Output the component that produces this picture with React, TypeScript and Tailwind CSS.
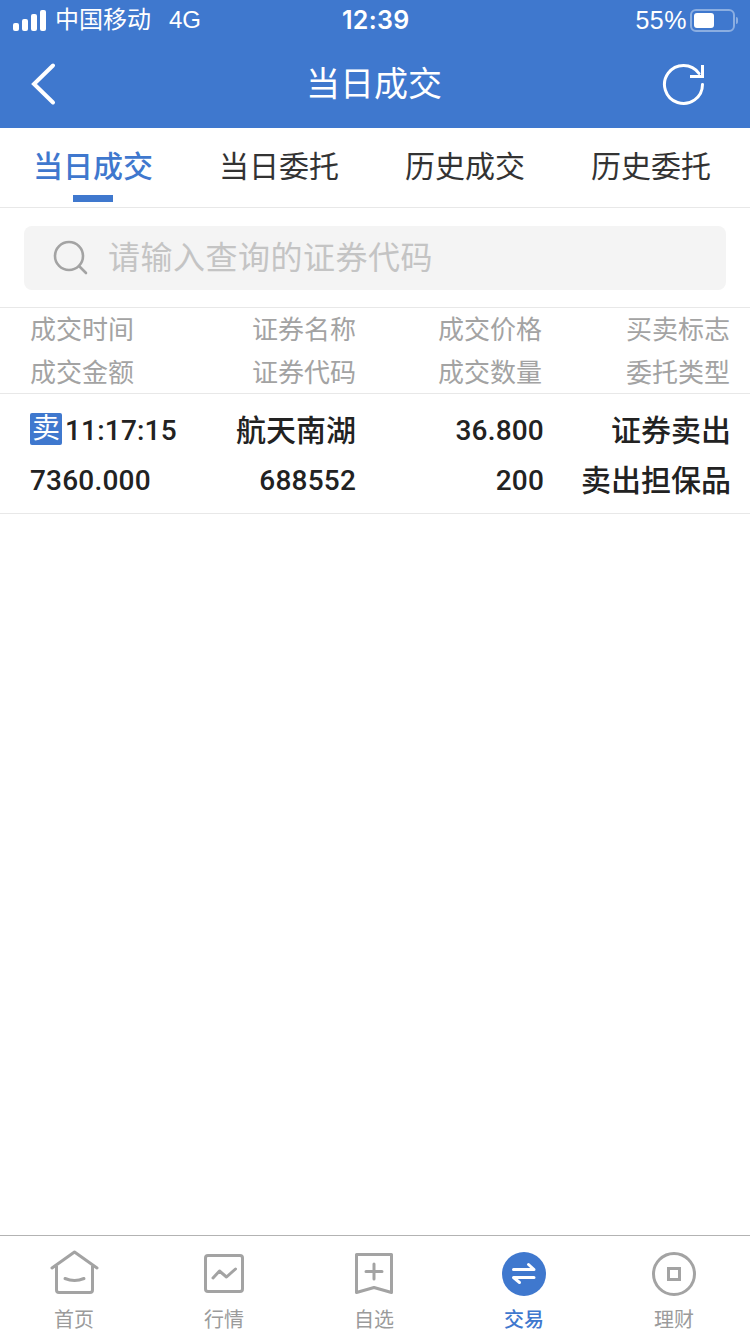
const cjk = "font-['Helvetica_Neue','Liberation_Sans','Noto_Sans_CJK_SC',sans-serif]";
const num = "font-['Roboto',sans-serif] font-medium text-[28px] tracking-[0.2px]";

function Signal() {
  return (
    <div className="flex items-end gap-[3px]">
      <div className="w-[6px] h-[8px] rounded-[2px] bg-white" />
      <div className="w-[6px] h-[12px] rounded-[2px] bg-white" />
      <div className="w-[6px] h-[17px] rounded-[2px] bg-white" />
      <div className="w-[6px] h-[21px] rounded-[2px] bg-white" />
    </div>
  );
}

function Battery() {
  return (
    <div className="flex items-center">
      <div className="w-[45px] h-[23px] rounded-[6px] border-2 border-white/40 p-[2px]">
        <div className="w-[20px] h-full rounded-[3px] bg-white" />
      </div>
      <div className="w-[2px] h-[7px] ml-[1px] rounded-r-[2px] bg-white/40" />
    </div>
  );
}

function Tab({ label, active }: { label: string; active?: boolean }) {
  return (
    <div className="relative flex justify-center pt-[18px]">
      <span className={`text-[30px] leading-[42px] ${active ? "text-[#3f78ce] font-medium" : "text-[#333333]"}`}>{label}</span>
      {active && <div className="absolute left-[73px] top-[67px] w-[40px] h-[7px] bg-[#3f78ce]" />}
    </div>
  );
}

const headerRows = [
  ["成交时间", "证券名称", "成交价格", "买卖标志"],
  ["成交金额", "证券代码", "成交数量", "委托类型"],
];

function NavItem({ label, active, children }: { label: string; active?: boolean; children: React.ReactNode }) {
  return (
    <div className="flex flex-col items-center pt-[13px] pr-[2px]">
      <svg width="50" height="50" viewBox="0 0 50 50" fill="none">
        {children}
      </svg>
      <span className={`text-[20px] leading-[28px] mt-[7px] ${active ? "text-[#3f78ce] font-medium" : "text-[#9b9b9b]"}`}>{label}</span>
    </div>
  );
}

export default function App() {
  return (
    <div className={`relative w-[750px] h-[1334px] bg-white flex flex-col overflow-hidden ${cjk}`}>
      <div className="bg-[#3f78ce] text-white h-[128px] flex flex-col">
        <div className="relative h-[40px] flex items-center justify-between pl-[13px] pr-[12px]">
          <div className="flex items-center">
            <Signal />
            <span className="ml-[9px] text-[24px] leading-[40px]">中国移动</span>
            <span className="ml-[18px] text-[24px] leading-[40px]">4G</span>
          </div>
          <span className="absolute left-[342px] top-0 font-['Inter',sans-serif] text-[25px] leading-[40px] font-semibold tracking-[0.3px]">12:39</span>
          <div className="flex items-center gap-[3px]">
            <span className="text-[25px] leading-[40px] tracking-[0.5px]">55%</span>
            <Battery />
          </div>
        </div>
        <div className="flex-1 grid grid-cols-[99px_1fr_101px] items-center">
          <svg width="30" height="44" viewBox="0 0 30 44" fill="none" className="ml-[29px]">
            <path d="M24 3.5 L5 22 L24 40.5" stroke="white" strokeWidth="4" strokeLinecap="round" strokeLinejoin="miter" />
          </svg>
          <span className="text-center text-[34px] leading-[48px]">当日成交</span>
          <svg width="46" height="46" viewBox="0 0 46 46" fill="none" className="ml-[12px]">
            <path d="M41.5 23.5 A19 19 0 1 1 38 12.5" stroke="white" strokeWidth="3" strokeLinecap="round" />
            <path d="M41.5 4 V15.5 H29" stroke="white" strokeWidth="3" />
          </svg>
        </div>
      </div>

      <div className="h-[80px] grid grid-cols-[186px_186px_186px_186px] border-b border-[#e8e8e8]">
        <Tab label="当日成交" active />
        <Tab label="当日委托" />
        <Tab label="历史成交" />
        <Tab label="历史委托" />
      </div>

      <div className="h-[100px] px-[24px] pt-[18px] border-b border-[#e8e8e8]">
        <div className="h-[64px] rounded-[8px] bg-[#f4f4f4] flex items-center pl-[28px]">
          <svg width="38" height="38" viewBox="0 0 38 38" fill="none">
            <circle cx="17" cy="17" r="14" stroke="#a3a3a3" strokeWidth="2.6" />
            <path d="M27.5 27.5 L34 34" stroke="#a3a3a3" strokeWidth="2.6" strokeLinecap="round" />
          </svg>
          <span className="ml-[18px] text-[32px] leading-[44px] tracking-[0.5px] text-[#c4c4c4]">请输入查询的证券代码</span>
        </div>
      </div>

      <div className="h-[86px] border-b border-[#e8e8e8] pl-[30px] pr-[20px] pt-[1px]">
        {headerRows.map((row) => (
          <div key={row[0]} className="grid grid-cols-[170px_156px_186px_188px] h-[43px] items-center text-[26px] leading-[43px] text-[#a3a3a3]">
            <span>{row[0]}</span>
            <span className="text-right">{row[1]}</span>
            <span className="text-right">{row[2]}</span>
            <span className="text-right">{row[3]}</span>
          </div>
        ))}
      </div>

      <div className="h-[120px] border-b border-[#e8e8e8] pl-[30px] pr-[19px] pt-[12px] text-[#222222] text-[30px] font-medium">
        <div className="grid grid-cols-[170px_156px_188px_187px] h-[50px] items-center leading-[50px]">
          <div className="flex items-center">
            <span className="w-[32px] h-[32px] mb-[4px] rounded-[2px] bg-[#3f78ce] text-white text-[28px] leading-[32px] font-normal text-center">卖</span>
            <span className={`ml-[3px] ${num}`}>11:17:15</span>
          </div>
          <span className="text-right">航天南湖</span>
          <span className={`text-right ${num}`}>36.800</span>
          <span className="text-right">证券卖出</span>
        </div>
        <div className="grid grid-cols-[170px_156px_188px_187px] h-[50px] items-center leading-[50px]">
          <span className={num}>7360.000</span>
          <span className={`text-right ${num}`}>688552</span>
          <span className={`text-right ${num}`}>200</span>
          <span className="text-right">卖出担保品</span>
        </div>
      </div>

      <div className="flex-1" />

      <div className="h-[99px] border-t border-[#b3b3b3] grid grid-cols-5 bg-white">
        <NavItem label="首页">
          <path d="M3 19 L25.5 3 L48 19" stroke="#a3a3a3" strokeWidth="3" strokeLinecap="round" strokeLinejoin="round" />
          <path d="M7.5 17 V41 Q7.5 43.5 10 43.5 H41 Q43.5 43.5 43.5 41 V17" stroke="#a3a3a3" strokeWidth="3" />
          <path d="M16 29.5 Q25.5 33.5 35 29.5" stroke="#a3a3a3" strokeWidth="3" strokeLinecap="round" />
        </NavItem>
        <NavItem label="行情">
          <rect x="6.5" y="6.5" width="37" height="36" rx="2.5" stroke="#a3a3a3" strokeWidth="3" />
          <path d="M14 29 L20.5 22 L27.5 28 L36.5 20" stroke="#a3a3a3" strokeWidth="3" strokeLinecap="round" strokeLinejoin="round" />
        </NavItem>
        <NavItem label="自选">
          <path d="M7.5 5.5 H42.5 V43.5 L25 38.5 L7.5 43.5 Z" stroke="#a3a3a3" strokeWidth="3" strokeLinejoin="round" />
          <path d="M25 15 V30 M17 22.5 H33" stroke="#a3a3a3" strokeWidth="3" strokeLinecap="round" />
        </NavItem>
        <NavItem label="交易" active>
          <circle cx="25" cy="25" r="22" fill="#3f78ce" />
          <path d="M14.5 20.5 H35 L29.5 15.5" stroke="white" strokeWidth="3" strokeLinecap="round" strokeLinejoin="round" />
          <path d="M35 28.5 H14.5 L20.5 33.5" stroke="white" strokeWidth="3" strokeLinecap="round" strokeLinejoin="round" />
        </NavItem>
        <NavItem label="理财">
          <circle cx="25" cy="25" r="20.5" stroke="#a3a3a3" strokeWidth="3" />
          <rect x="19.5" y="19.5" width="11" height="11" stroke="#a3a3a3" strokeWidth="3" />
        </NavItem>
      </div>
    </div>
  );
}
